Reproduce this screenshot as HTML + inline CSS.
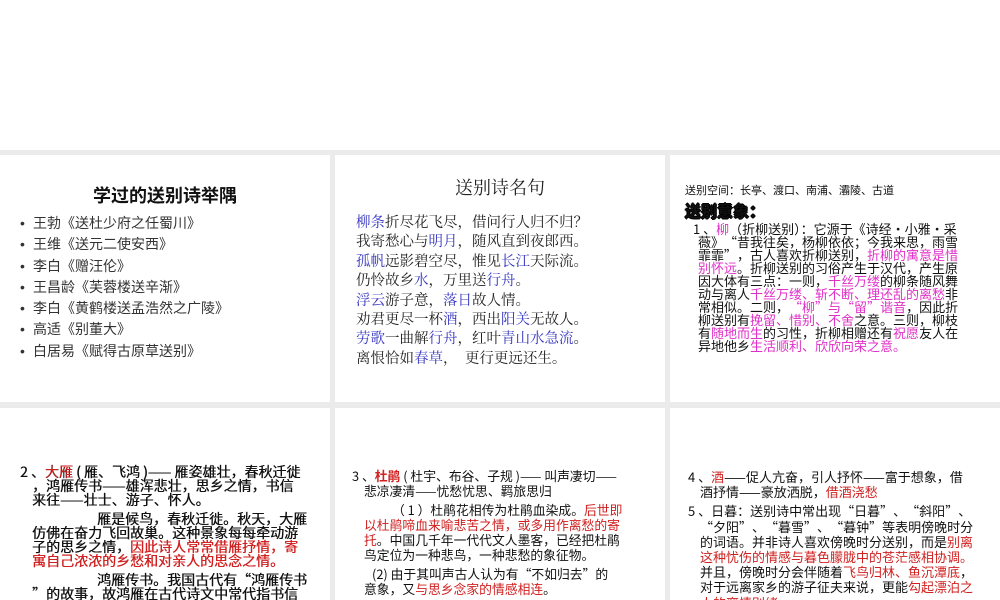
<!DOCTYPE html>
<html><head><meta charset="utf-8"><style>
*{margin:0;padding:0;box-sizing:border-box}
body{width:1000px;height:600px;background:#fff;position:relative;overflow:hidden;font-family:"Noto Sans CJK SC","Liberation Sans",sans-serif;color:#111}
.bg{position:absolute;left:0;top:150px;width:1000px;height:450px;background:#ebebeb}
.p{position:absolute;background:#fff;overflow:hidden}
.l{position:absolute;white-space:nowrap}
.b{color:#3535c0}.pk{color:#e030c8}.r{color:#d02020}
.t div{white-space:nowrap}
.lq,.rq{display:inline-block;width:1em}
.lq{text-align:right}.rq{text-align:left}
.bul div{position:relative;padding-left:13px}
.bul div:before{content:"•";position:absolute;left:0;font-family:"Liberation Sans",sans-serif}
</style></head><body>
<div class="bg"></div>
<div class="p" style="left:0;top:155px;width:330px;height:247px">
 <div class="l" style="left:0;width:330px;text-align:center;top:27px;font-size:18px;font-weight:bold;line-height:26px">学过的送别诗举隅</div>
 <div class="t bul" style="position:absolute;left:20px;top:58px;font-size:14px;color:#333;line-height:21.3px">
 <div>王勃《送杜少府之任蜀川》</div>
 <div>王维《送元二使安西》</div>
 <div>李白《赠汪伦》</div>
 <div>王昌龄《芙蓉楼送辛渐》</div>
 <div>李白《黄鹤楼送孟浩然之广陵》</div>
 <div>高适《别董大》</div>
 <div>白居易《赋得古原草送别》</div>
 </div>
</div>
<div class="p" style="left:335px;top:155px;width:330px;height:247px;font-family:'Noto Serif CJK SC','Liberation Serif',serif">
 <div class="l" style="left:0;width:330px;text-align:center;top:19px;font-size:18px;color:#222;line-height:26px">送别诗名句</div>
 <div class="t" style="position:absolute;left:21px;top:57px;font-size:14.5px;line-height:19.4px;color:#222">
 <div><span class="b">柳条</span>折尽花飞尽，借问行人归不归？</div>
 <div>我寄愁心与<span class="b">明月</span>，随风直到夜郎西。</div>
 <div><span class="b">孤帆</span>远影碧空尽，惟见<span class="b">长江</span>天际流。</div>
 <div>仍怜故乡<span class="b">水</span>，万里送<span class="b">行舟</span>。</div>
 <div><span class="b">浮云</span>游子意，<span class="b">落日</span>故人情。</div>
 <div>劝君更尽一杯<span class="b">酒</span>，西出<span class="b">阳关</span>无故人。</div>
 <div><span class="b">劳歌</span>一曲解<span class="b">行舟</span>，红叶<span class="b">青山水急流</span>。</div>
 <div>离恨恰如<span class="b">春草</span>，&nbsp;&nbsp;更行更远还生。</div>
 </div>
</div>
<div class="p" style="left:670px;top:155px;width:330px;height:247px">
 <div class="l" style="left:15px;top:28px;font-size:11px;line-height:15px">送别空间：长亭、渡口、南浦、灞陵、古道</div>
 <div class="l" style="left:15px;top:45px;font-size:16px;font-weight:bold;line-height:20px;text-shadow:1px 0 #000,-1px 0 #000,0 1px #000,0 -1px #000">送别意象：</div>
 <div class="t" style="position:absolute;left:23px;top:67px;font-size:13px;line-height:13px;color:#111">
 <div>1 、<span class="pk">柳</span>（折柳送别）：它源于《诗经•小雅•采</div>
 <div style="padding-left:5px">薇》<span class="lq">“</span>昔我往矣，杨柳依依；今我来思，雨雪</div>
 <div style="padding-left:5px">霏霏<span class="rq">”</span>，古人喜欢折柳送别，<span class="pk">折柳的寓意是惜</span></div>
 <div style="padding-left:5px"><span class="pk">别怀远</span>。折柳送别的习俗产生于汉代，产生原</div>
 <div style="padding-left:5px">因大体有三点：一则，<span class="pk">千丝万缕</span>的柳条随风舞</div>
 <div style="padding-left:5px">动与离人<span class="pk">千丝万缕、斩不断、理还乱的离愁</span>非</div>
 <div style="padding-left:5px">常相似。二则，<span class="pk"><span class="lq">“</span>柳<span class="rq">”</span>与<span class="lq">“</span>留<span class="rq">”</span>谐音</span>，因此折</div>
 <div style="padding-left:5px">柳送别有<span class="pk">挽留、惜别、不舍</span>之意。三则，柳枝</div>
 <div style="padding-left:5px">有<span class="pk">随地而生</span>的习性，折柳相赠还有<span class="pk">祝愿</span>友人在</div>
 <div style="padding-left:5px">异地他乡<span class="pk">生活顺利、欣欣向荣之意。</span></div>
 </div>
</div>
<div class="p" style="left:0;top:408px;width:330px;height:192px">
 <div class="t" style="position:absolute;left:20px;top:57px;font-size:14px;line-height:14px;color:#111;text-shadow:0.4px 0 #111">
 <div>2 、<span class="r">大雁</span> ( 雁、飞鸿 )—— 雁姿雄壮，春秋迁徙</div>
 <div style="padding-left:12px">，鸿雁传书——雄浑悲壮，思乡之情，书信</div>
 <div style="padding-left:12px">来往——壮士、游子、怀人。</div>
 <div style="padding-left:77px;margin-top:5px">雁是候鸟，春秋迁徙。秋天，大雁</div>
 <div style="padding-left:12px">仿佛在奋力飞回故巢。这种景象每每牵动游</div>
 <div style="padding-left:12px">子的思乡之情，<span class="r" style="text-shadow:0.4px 0 #d02020">因此诗人常常借雁抒情，寄</span></div>
 <div style="padding-left:12px;text-shadow:0.4px 0 #d02020" class="r">寓自己浓浓的乡愁和对亲人的思念之情。</div>
 <div style="padding-left:77px;margin-top:5px">鸿雁传书。我国古代有<span class="lq">“</span>鸿雁传书</div>
 <div style="padding-left:12px"><span class="rq">”</span>的故事，故鸿雁在古代诗文中常代指书信</div>
 </div>
</div>
<div class="p" style="left:335px;top:408px;width:330px;height:192px">
 <div class="t" style="position:absolute;left:17px;top:60px;font-size:12.8px;line-height:15px;color:#111">
 <div>3 、<span class="r" style="font-weight:bold">杜鹃</span> ( 杜宇、布谷、子规 )—— 叫声凄切——</div>
 <div style="padding-left:12px">悲凉凄清——忧愁忧思、羁旅思归</div>
 <div style="padding-left:40px;margin-top:4px">（ 1 ）杜鹃花相传为杜鹃血染成。<span class="r">后世即</span></div>
 <div style="padding-left:12px" class="r">以杜鹃啼血来喻悲苦之情，或多用作离愁的寄</div>
 <div style="padding-left:12px"><span class="r">托</span>。中国几千年一代代文人墨客，已经把杜鹃</div>
 <div style="padding-left:12px">鸟定位为一种悲鸟，一种悲愁的象征物。</div>
 <div style="padding-left:20px;margin-top:4px">(2) 由于其叫声古人认为有<span class="lq">“</span>不如归去<span class="rq">”</span>的</div>
 <div style="padding-left:12px">意象，又<span class="r">与思乡念家的情感相连</span>。</div>
 </div>
</div>
<div class="p" style="left:670px;top:408px;width:330px;height:192px">
 <div class="t" style="position:absolute;left:18px;top:61px;font-size:13px;line-height:15.2px;color:#111">
 <div>4 、<span class="r">酒</span>——促人亢奋，引人抒怀——富于想象，借</div>
 <div style="padding-left:12px">酒抒情——豪放洒脱，<span class="r">借酒浇愁</span></div>
 <div style="margin-top:4px">5 、日暮：送别诗中常出现<span class="lq">“</span>日暮<span class="rq">”</span>、<span class="lq">“</span>斜阳<span class="rq">”</span>、</div>
 <div style="padding-left:12px"><span class="lq">“</span>夕阳<span class="rq">”</span>、<span class="lq">“</span>暮雪<span class="rq">”</span>、<span class="lq">“</span>暮钟<span class="rq">”</span>等表明傍晚时分</div>
 <div style="padding-left:12px">的词语。并非诗人喜欢傍晚时分送别，而是<span class="r">别离</span></div>
 <div style="padding-left:12px" class="r">这种忧伤的情感与暮色朦胧中的苍茫感相协调。</div>
 <div style="padding-left:12px">并且，傍晚时分会伴随着<span class="r">飞鸟归林、鱼沉潭底</span>，</div>
 <div style="padding-left:12px">对于远离家乡的游子征夫来说，更能<span class="r">勾起漂泊之</span></div>
 <div style="padding-left:12px" class="r">人的离情别绪。</div>
 </div>
</div>
</body></html>
